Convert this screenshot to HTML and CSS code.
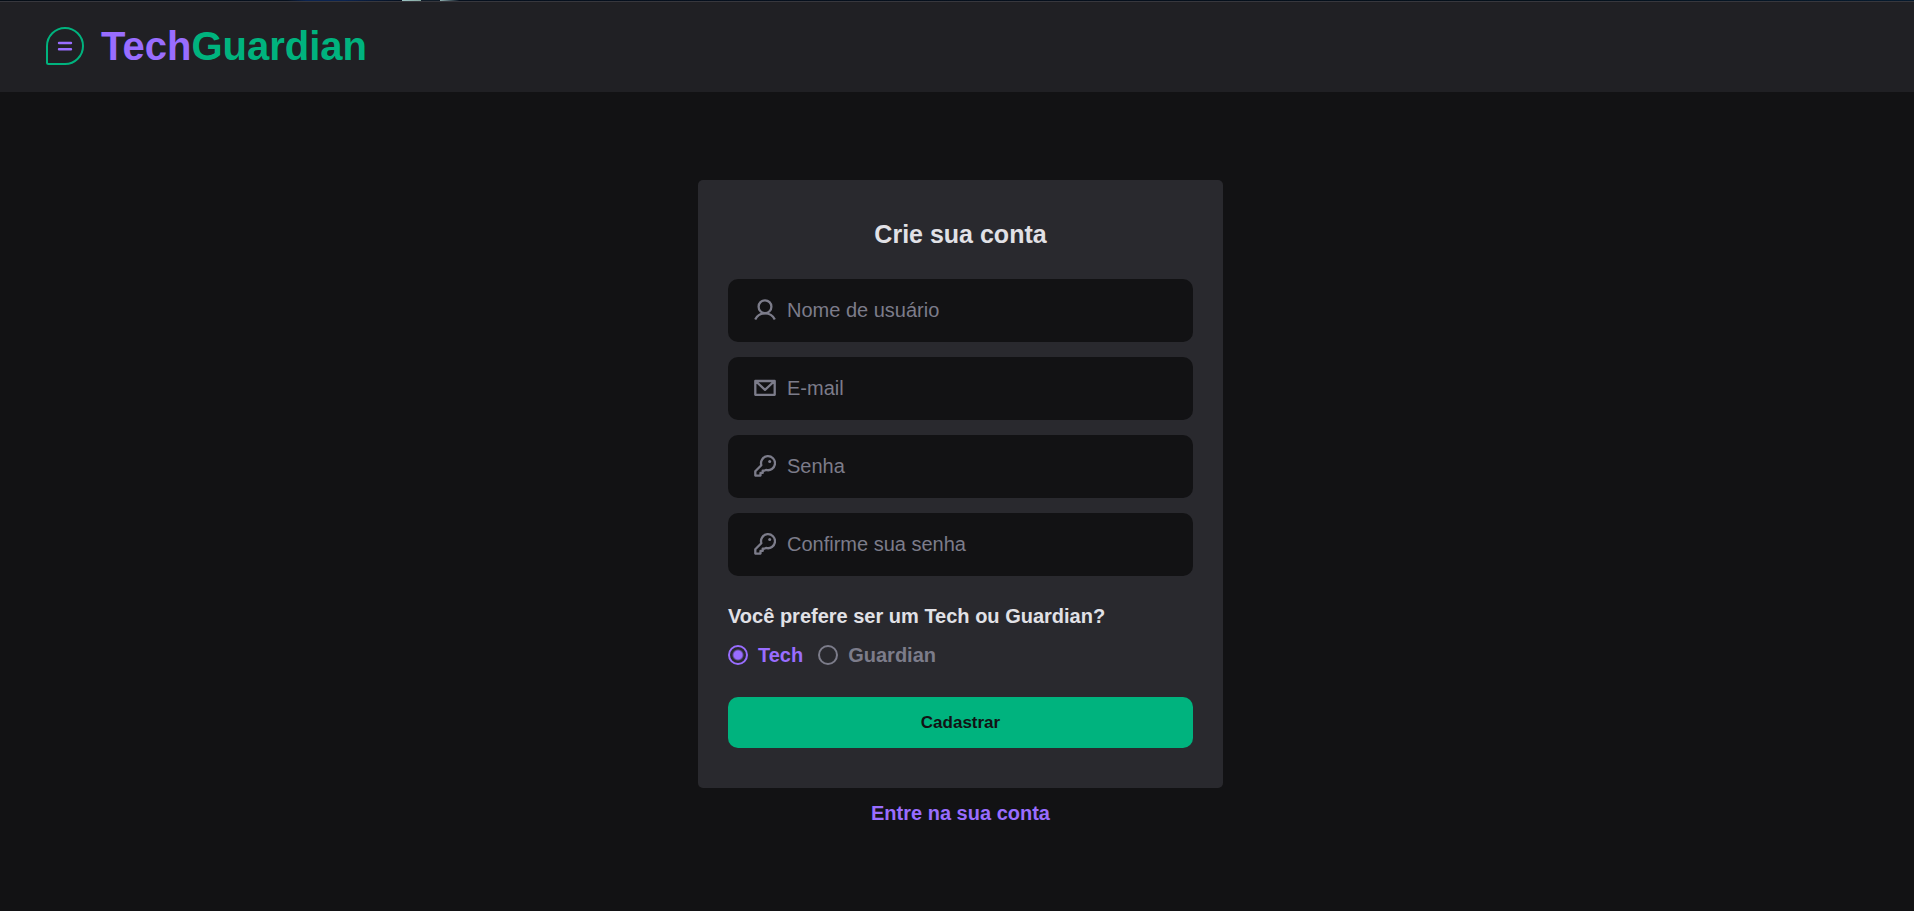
FILE: index.html
```html
<!DOCTYPE html>
<html lang="pt-BR">
<head>
<meta charset="utf-8">
<title>TechGuardian</title>
<link rel="stylesheet" href="styles.css">
</head>
<body>
<div class="strip"></div>
<header class="header">
  <svg class="logo-icon" viewBox="0 0 38 38" fill="none" stroke-width="2" stroke-linecap="round" aria-hidden="true">
    <path stroke="#00b37e" d="M19 1a18 18 0 0 1 0 36H2.500A1.500 1.500 0 0 1 1 35.500V19A18 18 0 0 1 19 1Z"/>
    <path stroke="#996dff" stroke-width="2.400" d="M13 16h12M13 22.200h12"/>
  </svg>
  <span class="logo-text"><span class="logo-tech">Tech</span><span class="logo-guardian">Guardian</span></span>
</header>
<main class="main">
  <form class="card">
    <h1 class="title">Crie sua conta</h1>
    <div class="fields">
      <label class="field">
        <svg class="icon" viewBox="0 0 22 22" aria-hidden="true"><circle cx="11" cy="7.700" r="6.400"/><path d="M1.200 20.400C3 16.800 6.500 14.300 11 14.300S19 16.800 20.800 20.400"/></svg>
        <input class="input" type="text" placeholder="Nome de usuário" aria-label="Nome de usuário">
      </label>
      <label class="field">
        <svg class="icon" viewBox="0 0 22 22" aria-hidden="true"><path d="M1.300 4h19.400v13.800h-19.400ZM2 4.500l9 8.300 9-8.300"/></svg>
        <input class="input" type="email" placeholder="E-mail" aria-label="E-mail">
      </label>
      <label class="field">
        <svg class="icon" viewBox="0 0 22 22" aria-hidden="true"><path d="M7.300 10.200A7 7 0 1 1 12 14.900L10.700 15.600H8.700V17.900H6.500V20.600H1.300V16.200Z"/><circle class="dot" cx="15.700" cy="6.400" r="1.500"/></svg>
        <input class="input" type="password" placeholder="Senha" aria-label="Senha">
      </label>
      <label class="field">
        <svg class="icon" viewBox="0 0 22 22" aria-hidden="true"><path d="M7.300 10.200A7 7 0 1 1 12 14.900L10.700 15.600H8.700V17.900H6.500V20.600H1.300V16.200Z"/><circle class="dot" cx="15.700" cy="6.400" r="1.500"/></svg>
        <input class="input" type="password" placeholder="Confirme sua senha" aria-label="Confirme sua senha">
      </label>
    </div>
    <fieldset class="choice">
      <legend class="question">Você prefere ser um Tech ou Guardian?</legend>
      <div class="options">
        <label class="option"><input class="radio" type="radio" name="role" checked><span>Tech</span></label>
        <label class="option"><input class="radio" type="radio" name="role"><span>Guardian</span></label>
      </div>
    </fieldset>
    <button class="submit" type="submit">Cadastrar</button>
  </form>
  <a class="login" href="#">Entre na sua conta</a>
</main>
</body>
</html>
```
FILE: styles.css
```css
* { box-sizing: border-box; }

body {
  margin: 0;
  background: #121214;
  color: #e1e1e6;
  font-family: "Liberation Sans", Arial, sans-serif;
  font-size: 20px;
  line-height: 24px;
}

.strip {
  height: 1px;
  background: linear-gradient(90deg,
    #050d16 0, #06101e 15%, #0a2350 16%, #0a2350 18%, #06101e 21%,
    #9cc4c4 21%, #86a8a0 22%, #101c28 22%, #101c28 23%, #8fb0b0 23%,
    #06101e 24%, #050f1c 60%, #04101a 80%, #061a2e 100%);
}
.header {
  display: flex;
  align-items: center;
  gap: 17px;
  height: 91px;
  padding: 0 46px 2px;
  border-top: 1px solid #37373d;
  background: #202024;
}
.logo-icon { width: 38px; height: 38px; }
.logo-text { font-size: 40px; line-height: 46px; font-weight: bold; }
.logo-tech { color: #996dff; }
.logo-guardian { color: #00b37e; }

.main {
  display: flex;
  flex-direction: column;
  align-items: center;
  gap: 13px;
  padding: 88px 0 32px 7px;
}
.card {
  width: 100%;
  max-width: 525px;
  padding: 40px 30px;
  border-radius: 5px;
  background: #29292e;
}
.title {
  margin: 0 0 31px;
  font-size: 25px;
  line-height: 28px;
  text-align: center;
}
.fields { display: grid; gap: 15px; }
.field {
  display: flex;
  align-items: center;
  gap: 11px;
  height: 63px;
  padding: 0 26px 2px;
  border-radius: 10px;
  background: #121214;
}
.field:focus-within { outline: 2px solid #996dff; }
.icon {
  flex: none;
  width: 22px;
  height: 22px;
  fill: none;
  stroke: #7c7c8a;
  stroke-width: 2.3;
  stroke-linejoin: round;
}
.dot { fill: #7c7c8a; stroke: none; }
.input {
  flex: 1;
  min-width: 0;
  padding: 0;
  border: 0;
  outline: 0;
  background: transparent;
  color: #e1e1e6;
  font: inherit;
}
.input::placeholder { color: #7c7c8a; opacity: 1; }

.choice {
  margin: 28px 0 30px;
  padding: 0;
  border: 0;
  font-weight: bold;
}
.question { padding: 0; margin-bottom: 15px; }
.options { display: flex; gap: 15px; }
.option {
  display: flex;
  align-items: center;
  gap: 10px;
  color: #7c7c8a;
}
.option:has(:checked) { color: #996dff; }
.radio {
  appearance: none;
  width: 20px;
  height: 20px;
  margin: 0;
  border: 2px solid #7c7c8a;
  border-radius: 50%;
}
.radio:checked {
  border-color: #996dff;
  background: radial-gradient(circle, #996dff 4px, transparent 6px);
}
.submit {
  display: block;
  width: 100%;
  height: 51px;
  padding: 0;
  border: 0;
  border-radius: 10px;
  background: #00b37e;
  color: #121214;
  font: bold 17px "Liberation Sans", Arial, sans-serif;
}
.login {
  color: #996dff;
  font-weight: bold;
  text-decoration: none;
}
```
